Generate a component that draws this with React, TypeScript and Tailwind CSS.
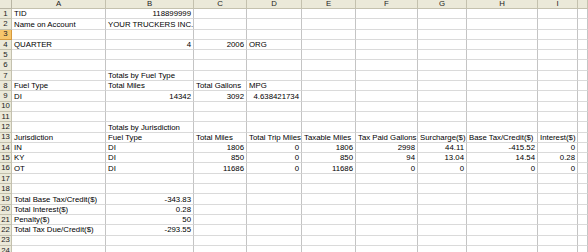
type Cell = string | number | null;

const columns = ['A', 'B', 'C', 'D', 'E', 'F', 'G', 'H', 'I', ''];

const rows: Cell[][] = [
  ['TID', 118899999],
  ['Name on Account', 'YOUR TRUCKERS INC.'],
  [],
  ['QUARTER', 4, 2006, 'ORG'],
  [],
  [],
  [null, 'Totals by Fuel Type'],
  ['Fuel Type', 'Total Miles', 'Total Gallons', 'MPG'],
  ['DI', 14342, 3092, 4.638421734],
  [],
  [],
  [null, 'Totals by Jurisdiction'],
  ['Jurisdiction', 'Fuel Type', 'Total Miles', 'Total Trip Miles', 'Taxable Miles', 'Tax Paid Gallons', 'Surcharge($)', 'Base Tax/Credit($)', 'Interest($)'],
  ['IN', 'DI', 1806, 0, 1806, 2998, 44.11, -415.52, 0],
  ['KY', 'DI', 850, 0, 850, 94, 13.04, 14.54, 0.28],
  ['OT', 'DI', 11686, 0, 11686, 0, 0, 0, 0],
  [],
  [],
  ['Total Base Tax/Credit($)', -343.83],
  ['Total Interest($)', 0.28],
  ['Penalty($)', 50],
  ['Total Tax Due/Credit($)', -293.55],
  [],
  [],
];

const activeRow = 3;

export default function App() {
  return (
    <div className="w-[588px] h-[252px] overflow-hidden bg-white text-black font-['Liberation_Sans',Arial,sans-serif] text-[7.8px]">
      <div className="grid grid-cols-[12px_94px_88px_53px_55px_54px_62px_49px_71px_40px_1fr] auto-rows-[10.3px] grid-rows-[9px]">
        {/* header row */}
        <div className="bg-[#ebe9d9] border-r border-b border-[#b9b6a4]" />
        {columns.map((c, i) => (
          <div
            key={'h' + i}
            className="bg-[#ebe9d9] border-r border-b border-[#c4c1ae] flex items-center justify-center leading-none text-[#222]"
          >
            {c}
          </div>
        ))}

        {rows.map((row, r) => (
          <Row key={r} index={r + 1} cells={row} />
        ))}
      </div>
    </div>
  );
}

function Row({ index, cells }: { index: number; cells: Cell[] }) {
  const active = index === activeRow;
  return (
    <>
      <div
        className={
          active
            ? 'bg-[#f7c66b] border-r border-b border-[#d79a3c] flex items-center justify-center leading-none text-[#222]'
            : 'bg-[#ebe9d9] border-r border-b border-[#c4c1ae] flex items-center justify-center leading-none text-[#222]'
        }
      >
        {index}
      </div>
      {columns.map((_, i) => {
        const v = cells[i];
        const isNum = typeof v === 'number';
        return (
          <div
            key={i}
            className={
              isNum
                ? 'border-r border-b border-r-[#c4c4c4] border-b-[#dadada] flex items-center justify-end px-[2px] pt-[1px] leading-none whitespace-nowrap'
                : 'border-r border-b border-r-[#c4c4c4] border-b-[#dadada] flex items-center justify-start px-[2px] pt-[1px] leading-none whitespace-nowrap'
            }
          >
            {v === null || v === undefined ? '' : String(v)}
          </div>
        );
      })}
    </>
  );
}
